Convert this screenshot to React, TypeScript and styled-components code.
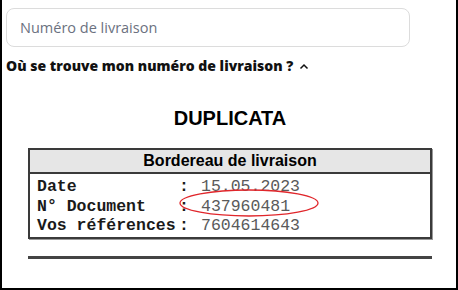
import React from "react";
import styled, { createGlobalStyle } from "styled-components";

const Global = createGlobalStyle`
  html, body { margin: 0; padding: 0; background: #fff; }
  * { box-sizing: border-box; }
`;

const Frame = styled.div`
  width: 458px;
  height: 290px;
  border-left: 2px solid #000;
  border-right: 2px solid #000;
  border-bottom: 2px solid #000;
  padding: 8px 4px 0 4px;
  display: flex;
  flex-direction: column;
  font-family: "Open Sans", "Noto Sans", sans-serif;
  overflow: hidden;
`;

const Field = styled.input`
  width: 404px;
  height: 39px;
  border: 1px solid #dcdcdc;
  border-radius: 8px;
  padding: 0 0 0 13px;
  font-family: "Open Sans", "Noto Sans", sans-serif;
  font-size: 14.5px;
  outline: none;
  &::placeholder { color: #6b7180; }
`;

const Toggle = styled.button`
  display: flex;
  align-items: center;
  gap: 6px;
  margin-top: 9px;
  padding: 0;
  border: 0;
  background: none;
  font-family: "Open Sans", "Noto Sans", sans-serif;
  font-weight: 800;
  font-size: 14px;
  line-height: 20px;
  color: #111;
  align-self: flex-start;
`;

const Doc = styled.div`
  margin-top: 31px;
  padding-left: 22px;
  width: 426px;
  display: flex;
  flex-direction: column;
  font-family: "Liberation Sans", Arial, sans-serif;
`;

const Title = styled.div`
  text-align: center;
  font-weight: 700;
  font-size: 20px;
  line-height: 23px;
  color: #000;
`;

const Table = styled.div`
  margin-top: 18px;
  width: 404px;
  border: 2px solid #3a3a3a;
  box-shadow: 1px 1px 0 #999;
  position: relative;
`;

const Head = styled.div`
  background: #e6e6e6;
  border-bottom: 2px solid #3a3a3a;
  text-align: center;
  font-weight: 700;
  font-size: 16px;
  line-height: 22px;
  color: #000;
`;

const Rows = styled.div`
  padding: 3px 0 1px 7px;
  display: flex;
  flex-direction: column;
`;

const Row = styled.div`
  display: grid;
  grid-template-columns: 142px 22px 1fr;
  font-family: "Liberation Mono", "Courier New", monospace;
  font-size: 16.5px;
  line-height: 19.7px;
  white-space: pre;
`;

const Label = styled.span`
  font-weight: 700;
  color: #1a1a1a;
`;

const Value = styled.span`
  color: #5a5a5a;
`;

const Ellipse = styled.svg`
  position: absolute;
  left: 149px;
  top: 39px;
  overflow: visible;
`;

const NextBox = styled.div`
  margin-top: 17px;
  width: 404px;
  height: 3px;
  background: #444;
`;

const rows = [
  ["Date", "15.05.2023"],
  ["N° Document", "437960481"],
  ["Vos références", "7604614643"],
];

export default function App() {
  return (
    <>
      <Global />
      <Frame>
        <Field placeholder="Numéro de livraison" />
        <Toggle type="button">
          Où se trouve mon numéro de livraison ?
          <svg width="10" height="7" viewBox="0 0 10 7">
            <path d="M1.5 5.5 L5 2 L8.5 5.5" fill="none" stroke="#111" strokeWidth="1.5" />
          </svg>
        </Toggle>
        <Doc>
          <Title>DUPLICATA</Title>
          <Table>
            <Head>Bordereau de livraison</Head>
            <Rows>
              {rows.map(([l, v]) => (
                <Row key={l}>
                  <Label>{l}</Label>
                  <Label>:</Label>
                  <Value>{v}</Value>
                </Row>
              ))}
            </Rows>
            <Ellipse width="140" height="28" viewBox="0 0 140 28">
              <ellipse cx="70" cy="14" rx="69" ry="13" fill="none" stroke="#e0262b" strokeWidth="1.3" />
            </Ellipse>
          </Table>
          <NextBox />
        </Doc>
      </Frame>
    </>
  );
}
